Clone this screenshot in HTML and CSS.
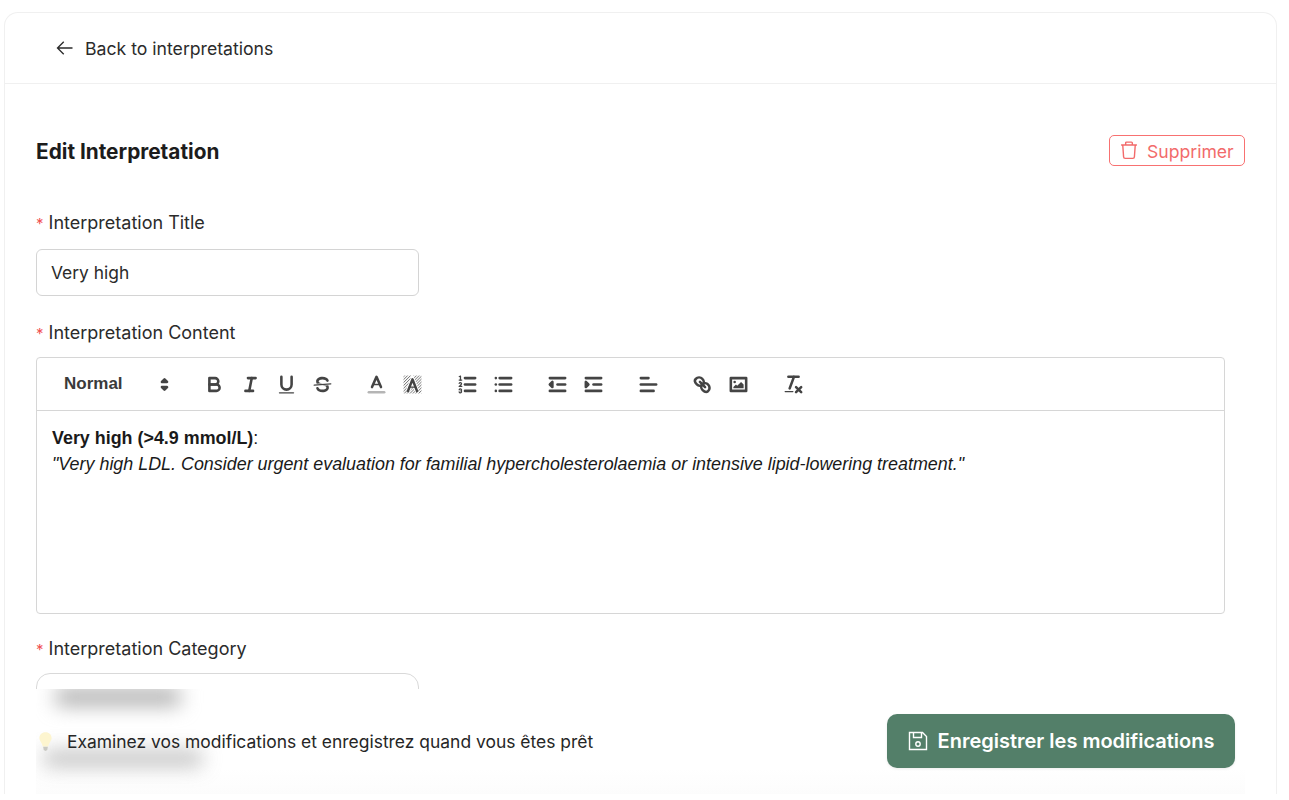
FILE: index.html

```html
<!DOCTYPE html>
<html lang="en">
<head>
    <meta charset="UTF-8">
    <title>Edit Interpretation</title>
    <link rel="stylesheet" href="styles.css">
</head>
<body>

<div class="card">
    <div class="card-header">
        <a class="back-link" href="#">
            <svg class="back-icon" viewBox="0 0 24 24"><path d="M21 12H3.500M10.500 4.500L3 12l7.500 7.500"/></svg>
            Back to interpretations
        </a>
    </div>

    <div class="card-body">
        <div class="title-row">
            <h1>Edit Interpretation</h1>
            <button class="delete-button">
                <svg class="delete-icon" viewBox="0 0 24 24"><path d="M2.500 6h19M8 6V3.500a1 1 0 0 1 1-1h6a1 1 0 0 1 1 1V6M4.500 6l1 14a2 2 0 0 0 2 2h9a2 2 0 0 0 2-2l1-14"/></svg>
                Supprimer
            </button>
        </div>

        <label class="field-label"><span class="required">*</span> Interpretation Title</label>
        <input class="text-input" type="text" value="Very high">

        <label class="field-label"><span class="required">*</span> Interpretation Content</label>
        <div class="editor">
            <div class="toolbar">
                <span class="picker">
                    Normal
                    <svg class="ql" viewBox="0 0 18 18"><polygon class="s f" points="7 11 9 13 11 11 7 11"/><polygon class="s f" points="7 7 9 5 11 7 7 7"/></svg>
                </span>
                <span class="tool-group">
                    <button class="tool"><svg class="ql" viewBox="0 0 18 18"><path class="s" d="M5,4H9.5A2.5,2.5,0,0,1,12,6.5v0A2.5,2.5,0,0,1,9.5,9H5V4Z"/><path class="s" d="M5,9h5.5A2.5,2.5,0,0,1,13,11.5v0A2.5,2.5,0,0,1,10.5,14H5V9Z"/></svg></button>
                    <button class="tool"><svg class="ql" viewBox="0 0 18 18"><line class="s" x1="7" x2="13" y1="4" y2="4"/><line class="s" x1="5" x2="11" y1="14" y2="14"/><line class="s" x1="8" x2="10" y1="14" y2="4"/></svg></button>
                    <button class="tool"><svg class="ql" viewBox="0 0 18 18"><path class="s" d="M5,3V9a4,4,0,0,0,4,4H9a4,4,0,0,0,4-4V3"/><rect class="f" height="1" rx=".5" ry=".5" width="12" x="3" y="15"/></svg></button>
                    <button class="tool"><svg class="ql" viewBox="0 0 18 18"><line class="s thin" x1="15.5" x2="2.5" y1="8.5" y2="9.5"/><path class="f" d="M9.007,8C6.542,7.791,6,7.519,6,6.5,6,5.792,7.283,5,9,5c1.571,0,2.765.679,2.969,1.309a1,1,0,0,0,1.9-.617C13.356,4.106,11.354,3,9,3,6.2,3,4,4.538,4,6.5a3.2,3.2,0,0,0,.5,1.843Z"/><path class="f" d="M8.984,10C11.457,10.208,12,10.479,12,11.5c0,.708-1.283,1.5-3,1.5-1.571,0-2.765-.679-2.969-1.309a1,1,0,1,0-1.9.617C4.644,13.894,6.646,15,9,15c2.8,0,5-1.538,5-3.5a3.2,3.2,0,0,0-.5-1.843Z"/></svg></button>
                </span>
                <span class="tool-group">
                    <button class="tool"><svg class="ql" viewBox="0 0 18 18"><line class="s label-line" x1="3" x2="15" y1="15" y2="15"/><polyline class="s" points="5.500 11 9 3 12.500 11"/><line class="s thin" x1="11.630" x2="6.380" y1="9" y2="9"/></svg></button>
                    <button class="tool"><svg class="ql" viewBox="0 0 18 18">
                        <defs><pattern id="hatch" width="1.600" height="1.600" patternUnits="userSpaceOnUse" patternTransform="rotate(45)"><rect width="0.600" height="1.600" fill="#777"/></pattern></defs>
                        <rect x="2" y="2" width="14" height="14" fill="url(#hatch)"/>
                        <polyline class="halo" points="5.500 14 9 5 12.500 14"/>
                        <polyline class="s" points="5.500 14 9 5 12.500 14"/><line class="s thin" x1="11.630" x2="6.380" y1="11" y2="11"/></svg></button>
                </span>
                <span class="tool-group">
                    <button class="tool"><svg class="ql" viewBox="0 0 18 18"><line class="s" x1="7" x2="15" y1="4" y2="4"/><line class="s" x1="7" x2="15" y1="9" y2="9"/><line class="s" x1="7" x2="15" y1="14" y2="14"/><line class="s thin" x1="2.500" x2="4.500" y1="5.500" y2="5.500"/><path class="f" d="M3.5,6A0.5,0.5,0,0,1,3,5.5V3.085l-0.276.138A0.5,0.5,0,0,1,2.053,3c-0.124-.247-0.023-0.324.224-0.447l1-.5A0.5,0.5,0,0,1,4,2.5v3A0.5,0.5,0,0,1,3.5,6Z"/><path class="s thin" d="M4.5,10.5h-2c0-.234,1.85-1.076,1.85-2.234A0.959,0.959,0,0,0,2.5,8.156"/><path class="s thin" d="M2.5,14.846a0.959,0.959,0,0,0,1.85-.109A0.7,0.7,0,0,0,3.75,14a0.688,0.688,0,0,0,.6-0.736,0.959,0.959,0,0,0-1.85-.109"/></svg></button>
                    <button class="tool"><svg class="ql" viewBox="0 0 18 18"><line class="s" x1="6" x2="15" y1="4" y2="4"/><line class="s" x1="6" x2="15" y1="9" y2="9"/><line class="s" x1="6" x2="15" y1="14" y2="14"/><line class="s" x1="3" x2="3" y1="4" y2="4"/><line class="s" x1="3" x2="3" y1="9" y2="9"/><line class="s" x1="3" x2="3" y1="14" y2="14"/></svg></button>
                </span>
                <span class="tool-group">
                    <button class="tool"><svg class="ql" viewBox="0 0 18 18"><line class="s" x1="3" x2="15" y1="14" y2="14"/><line class="s" x1="3" x2="15" y1="4" y2="4"/><line class="s" x1="9" x2="15" y1="9" y2="9"/><polygon class="s f" points="5 7 5 11 3 9 5 7"/></svg></button>
                    <button class="tool"><svg class="ql" viewBox="0 0 18 18"><line class="s" x1="3" x2="15" y1="14" y2="14"/><line class="s" x1="3" x2="15" y1="4" y2="4"/><line class="s" x1="9" x2="15" y1="9" y2="9"/><polygon class="s f" points="3 7 3 11 5 9 3 7"/></svg></button>
                </span>
                <span class="tool-group">
                    <button class="tool"><svg class="ql" viewBox="0 0 18 18"><line class="s" x1="3" x2="15" y1="9" y2="9"/><line class="s" x1="3" x2="13" y1="14" y2="14"/><line class="s" x1="3" x2="9" y1="4" y2="4"/></svg></button>
                </span>
                <span class="tool-group">
                    <button class="tool"><svg class="ql" viewBox="0 0 18 18"><line class="s" x1="7" x2="11" y1="7" y2="11"/><path class="s" d="M8.9,4.577a3.476,3.476,0,0,1,.36,4.679A3.476,3.476,0,0,1,4.577,8.9C3.185,7.5,2.231,6.118,3.675,4.674S7.5,3.185,8.9,4.577Z"/><path class="s" d="M13.423,9.1a3.476,3.476,0,0,0-4.679-.36,3.476,3.476,0,0,0,.36,4.679c1.392,1.392,2.5,2.349,4.179.9S14.815,10.5,13.423,9.1Z"/></svg></button>
                    <button class="tool"><svg class="ql" viewBox="0 0 18 18"><rect class="s" height="10" width="12" x="3" y="4"/><circle class="f" cx="6" cy="7" r="1"/><polyline class="f" points="5 12 5 11 7 9 8 10 11 7 13 9 13 12 5 12"/></svg></button>
                </span>
                <span class="tool-group">
                    <button class="tool"><svg class="ql" viewBox="0 0 18 18"><line class="s" x1="5" x2="13" y1="3" y2="3"/><line class="s" x1="6" x2="9.350" y1="12" y2="3"/><line class="s" x1="11" x2="15" y1="11" y2="15"/><line class="s" x1="15" x2="11" y1="11" y2="15"/><rect class="f" height="1" rx=".5" ry=".5" width="7" x="2" y="14"/></svg></button>
                </span>
            </div>
            <div class="editor-text">
                <p><strong>Very high (&gt;4.9 mmol/L)</strong>:</p>
                <p><em>"Very high LDL. Consider urgent evaluation for familial hypercholesterolaemia or intensive lipid-lowering treatment."</em></p>
            </div>
        </div>

        <label class="field-label"><span class="required">*</span> Interpretation Category</label>
        <div class="select-box"></div>
    </div>

    <!-- Sticky save bar, the form behind it shows through blurred -->
    <div class="save-bar">
        <span class="blur-blob blob-top"></span>
        <span class="blur-blob blob-bottom"></span>
        <div class="hint">
            <svg class="bulb" viewBox="0 0 16 22">
                <path class="bulb-glass" d="M8 1C4 1 1.500 3.800 1.500 7.200c0 3.300 2.900 5 3.600 9h5.800c.7-4 3.600-5.700 3.600-9C14.500 3.800 12 1 8 1z"/>
                <path class="bulb-base" d="M5.500 16.500h5l-.6 3.500-1.900 1-1.900-1z"/>
            </svg>
            Examinez vos modifications et enregistrez quand vous êtes prêt
        </div>
        <button class="save-button">
            <svg class="save-icon" viewBox="0 0 20 20">
                <path d="M1.500 1.500h13l4 4v13h-17zM5.500 1.500v5h8v-5"/>
                <circle cx="10" cy="13" r="2.200"/>
            </svg>
            Enregistrer les modifications
        </button>
    </div>
</div>

</body>
</html>
```

FILE: styles.css

```css
html, body {
    height: 100%;
}
body {
    margin: 0;
    background-color: #fff;
    color: #1f1f1f;
    font-family: Inter, "Noto Sans", sans-serif;
    font-size: 18px;
    overflow: hidden;
}
.card {
    position: relative;
    box-sizing: border-box;
    width: 1273px;
    height: 782px;
    margin: 12px 0 0 4px;
    border: 1px solid #f0f0f0;
    border-bottom: none;
    border-radius: 14px 14px 0 0;
    overflow: hidden;
}
.card-header {
    display: flex;
    align-items: center;
    height: 70px;
    padding-left: 50px;
    border-bottom: 1px solid #f0f0f0;
}
.back-link {
    display: flex;
    align-items: center;
    gap: 10px;
    color: #2b2b2b;
    font-size: 17.65px;
    text-decoration: none;
}
.back-icon {
    width: 20px;
    height: 20px;
    fill: none;
    stroke: #2b2b2b;
    stroke-width: 1.6;
}
.card-body {
    padding: 51px 31px 0;
}
.title-row {
    display: flex;
    align-items: center;
    justify-content: space-between;
    margin-bottom: 45px;
}
h1 {
    margin: 0;
    padding-top: 2px;
    font-size: 20.8px;
    font-weight: 700;
    color: #1c1c1c;
}
.delete-button {
    display: flex;
    align-items: center;
    gap: 8px;
    box-sizing: border-box;
    width: 136px;
    height: 31px;
    padding: 1px 0 0 9px;
    background: #fff;
    border: 1px solid #f87171;
    border-radius: 5px;
    color: #f26b6b;
    font: inherit;
    font-size: 17.6px;
}
.delete-icon {
    width: 20px;
    height: 20px;
    margin-top: -2px;
    fill: none;
    stroke: #f26b6b;
    stroke-width: 1.7;
}
.field-label {
    display: block;
    color: #2b2b2b;
    font-size: 18px;
    line-height: 24px;
}
.required {
    color: #f05252;
    font-size: 15px;
}
.text-input {
    display: block;
    box-sizing: border-box;
    width: 383px;
    height: 47px;
    margin: 13px 0 25px;
    padding: 0 14px;
    border: 1px solid #d4d4d4;
    border-radius: 6px;
    color: #2b2b2b;
    font: inherit;
    font-size: 17.4px;
}
.editor {
    box-sizing: border-box;
    width: 1189px;
    height: 257px;
    margin: 11px 0 23px;
    border: 1px solid #d6d6d6;
    border-radius: 4px;
}
.toolbar {
    display: flex;
    align-items: center;
    box-sizing: border-box;
    height: 53px;
    padding-left: 10px;
    border-bottom: 1px solid #d6d6d6;
}
.picker {
    display: flex;
    align-items: center;
    justify-content: space-between;
    box-sizing: border-box;
    width: 130.5px;
    padding: 0 2px 0 17px;
    margin-right: 18.5px;
    color: #3a3a3a;
    font-family: "Liberation Sans", Arial, sans-serif;
    font-weight: 700;
    font-size: 17px;
}
.tool-group {
    display: flex;
    margin-right: 18.6px;
}
.tool {
    display: flex;
    align-items: center;
    justify-content: center;
    width: 36px;
    height: 31px;
    padding: 0;
    background: none;
    border: none;
}
.ql {
    width: 23px;
    height: 23px;
    flex-shrink: 0;
}
.s {
    fill: none;
    stroke: #444;
    stroke-width: 2;
    stroke-linecap: round;
    stroke-linejoin: round;
}
.s.thin {
    stroke-width: 1;
}
.s.f, .f {
    fill: #444;
}
.halo {
    fill: none;
    stroke: #fff;
    stroke-width: 3.5;
}
.label-line {
    stroke: #b5b5b5;
}
.editor-text {
    padding: 14px 15px 0;
    font-family: "Liberation Sans", Arial, sans-serif;
    font-size: 17.9px;
    line-height: 26px;
    color: #1a1a1a;
}
.editor-text p {
    margin: 0;
}
.select-box {
    box-sizing: border-box;
    width: 383px;
    height: 47px;
    margin-top: 11px;
    border: 1px solid #d9d9d9;
    border-radius: 14px;
}
.save-bar {
    position: absolute;
    left: 31px;
    top: 676px;
    display: flex;
    align-items: center;
    justify-content: space-between;
    box-sizing: border-box;
    width: 1209px;
    height: 106px;
    padding: 0 10px 0 2px;
    overflow: hidden;
    background: linear-gradient(to bottom, #fff 75%, #fcfcfc);
}
.blur-blob {
    position: absolute;
    background-color: #a6a6a6;
    filter: blur(10px);
}
.blob-top {
    left: 20px;
    top: 0;
    width: 124px;
    height: 16px;
}
.blob-bottom {
    left: 8px;
    top: 62px;
    width: 158px;
    height: 15px;
    opacity: 0.75;
}
.hint {
    position: relative;
    display: flex;
    align-items: center;
    gap: 14px;
    margin-bottom: 1px;
    color: #262626;
    font-size: 17.45px;
}
.bulb {
    width: 15px;
    height: 21px;
}
.bulb-glass {
    fill: #fdf5cf;
}
.bulb-base {
    fill: #c9c9c2;
}
.save-button {
    position: relative;
    display: flex;
    align-items: center;
    justify-content: center;
    gap: 10px;
    width: 348px;
    height: 54px;
    margin-bottom: 3px;
    padding: 1px 0 0;
    background-color: #537f69;
    border: none;
    border-radius: 10px;
    box-shadow: 0 1px 3px rgba(0, 0, 0, 0.08);
    color: #fff;
    font: inherit;
    font-size: 20px;
    font-weight: 600;
}
.save-icon {
    width: 20px;
    height: 20px;
    fill: none;
    stroke: #fff;
    stroke-width: 1.4;
}
```
